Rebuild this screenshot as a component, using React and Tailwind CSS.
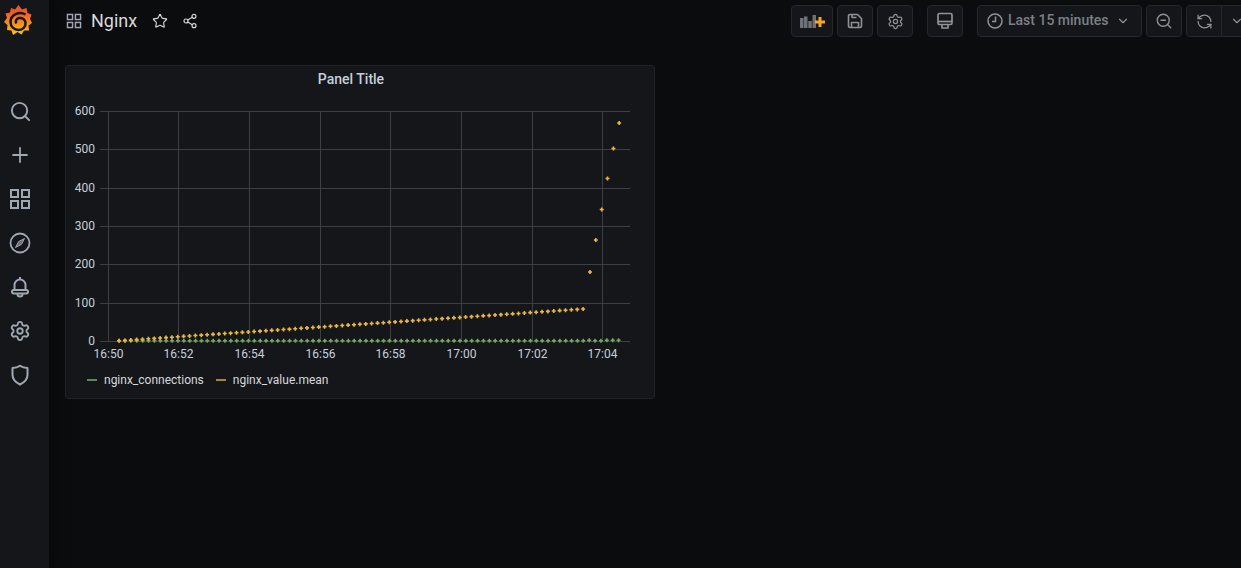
import { Search, Plus, Settings, Star, Share2, ZoomOut, RefreshCcw, ChevronDown } from "lucide-react";

const FONT = "font-['Roboto',_'Liberation_Sans',_sans-serif]";

function GridIcon({ size = 22, className = "" }) {
  return (
    <svg width={size} height={size} viewBox="0 0 22 22" fill="none" stroke="currentColor" strokeWidth="2" className={className}>
      <rect x="2" y="2" width="7" height="7" />
      <rect x="13" y="2" width="7" height="7" />
      <rect x="2" y="13" width="7" height="7" />
      <rect x="13" y="13" width="7" height="7" />
    </svg>
  );
}

function CompassIcon() {
  return (
    <svg width="22" height="22" viewBox="0 0 22 22" fill="none" stroke="currentColor" strokeWidth="1.800">
      <circle cx="11" cy="11" r="9.500" />
      <path d="M15.500 6.500 L12.400 12.400 L6.500 15.500 L9.600 9.600 Z" fill="currentColor" fillOpacity="0.6" strokeWidth="1" />
    </svg>
  );
}

function BellIcon() {
  return (
    <svg width="22" height="22" viewBox="0 0 22 22" fill="none" stroke="currentColor" strokeWidth="2">
      <path d="M11 1V3.500" />
      <path d="M5.500 14V9a5.500 5.500 0 0 1 11 0V14" />
      <rect x="3" y="14" width="16" height="3.500" rx="1.750" />
      <path d="M8.500 18a2.500 2.500 0 0 0 5 0" />
    </svg>
  );
}

function ShieldIcon() {
  return (
    <svg width="22" height="22" viewBox="0 0 22 22" fill="none" stroke="currentColor" strokeWidth="2">
      <path d="M11 1.800 C13 3.300 15.500 4 18.500 4 V11 C18.500 15.500 15 18.500 11 20.500 C7 18.500 3.500 15.500 3.500 11 V4 C6.500 4 9 3.300 11 1.800 Z" strokeLinejoin="round" />
    </svg>
  );
}

function SaveIcon() {
  return (
    <svg width="16" height="16" viewBox="0 0 16 16" fill="none" stroke="currentColor" strokeWidth="1.600" strokeLinejoin="round">
      <path d="M3 1.500 H10.500 L14.500 5.500 V13 A1.500 1.500 0 0 1 13 14.500 H3 A1.500 1.500 0 0 1 1.500 13 V3 A1.500 1.500 0 0 1 3 1.500 Z" />
      <path d="M4.500 14.500 V9.500 H11.500 V14.500" />
      <path d="M5 1.500 V4.500 H9.500" />
    </svg>
  );
}

function MonitorIcon() {
  return (
    <svg width="18" height="18" viewBox="0 0 18 18" fill="none" stroke="currentColor" strokeWidth="1.700" strokeLinejoin="round">
      <rect x="2" y="1.500" width="14" height="11" rx="1.500" />
      <path d="M2 9.500 H16" />
      <path d="M6 12.500 V16 H12 V12.500" />
    </svg>
  );
}

function ClockIcon() {
  return (
    <svg width="16" height="16" viewBox="0 0 16 16" fill="none" stroke="currentColor" strokeWidth="1.500">
      <circle cx="8" cy="8" r="7" />
      <path d="M8.500 3.500 V8.500 H5" />
    </svg>
  );
}

function Logo() {
  return (
    <svg width="28" height="30" viewBox="0 0 28 30">
      <defs>
        <linearGradient id="g" x1="0" y1="1" x2="0" y2="0">
          <stop offset="0" stopColor="#fbca0a" />
          <stop offset="0.75" stopColor="#f05a28" />
          <stop offset="1" stopColor="#ef4f2a" />
        </linearGradient>
      </defs>
      <path
        fill="url(#g)"
        d="M14.500 0 L18 4.500 L22.500 3 L23.500 8 L27.500 9.500 L26 14 L28 18 L24.500 20.500 L25 25.500 L20 25.500 L17.500 29.500 L13.500 27 L9 30 L7.500 25.500 L3 25 L3.500 20 L0 17 L3 13 L1.500 8.500 L6 7.500 L7 3 L11 4.500 Z"
      />
      <path
        d="M21.500 9.500 C15 5.800 6.500 10 6.500 17 C6.500 22 10.500 25 14.500 25 C19 25 22 21.500 21.500 17.500 C21 14 18 12.500 15 13 C12.500 13.500 11 16 12.300 18.500"
        fill="none"
        stroke="#141619"
        strokeWidth="2.500"
      />
    </svg>
  );
}

function ToolButton({ className = "", children }) {
  return (
    <div className={`h-8 flex items-center justify-center bg-[#141619] border border-[#25272b] rounded-sm text-[#8e9297] ${className}`}>
      {children}
    </div>
  );
}

const navIcons = [
  <Search key="s" size={23} strokeWidth={2} />,
  <Plus key="p" size={24} strokeWidth={1.8} />,
  <GridIcon key="g" />,
  <CompassIcon key="c" />,
  <BellIcon key="b" />,
  <Settings key="st" size={22} strokeWidth={2} />,
  <ShieldIcon key="sh" />,
];

const yTicks = [0, 100, 200, 300, 400, 500, 600];
const xTicks = [
  ["16:50", 108.5], ["16:52", 178.5], ["16:54", 249.5], ["16:56", 320.5],
  ["16:58", 390.5], ["17:00", 461.5], ["17:02", 532.5], ["17:04", 602.5],
];
const yOf = (v) => Math.floor(341.5 - v * 0.3833) + 0.5;

const step = 5.875;
const yellow = [];
for (let i = 0; i < 80; i++) yellow.push([119 + i * step, 340.8 - (i * 31.8) / 79]);
const spike = [[590, 272], [595.8, 240], [601.7, 209.5], [607.5, 178.5], [613.4, 148.5], [619.2, 123]];
const green = [];
for (let i = 0; i < 86; i++) green.push([119.2 + i * step, i > 82 || i === 80 ? 340.2 : 340.8]);

function Dot({ x, y, color }) {
  return <path d={`M${x - 2} ${y}H${x + 2}M${x} ${y - 2}V${y + 2}`} stroke={color} strokeWidth="1.6" />;
}

function Chart() {
  return (
    <svg width="588" height="268" viewBox="66 98 588 268" className="block">
      {yTicks.map((v) => (
        <g key={v}>
          <line x1="100" x2="630" y1={yOf(v)} y2={yOf(v)} stroke="#3d3f43" />
          <text x="95" y={yOf(v) + 3.5} textAnchor="end" fontSize="12" fill="#c7d0d9">{v}</text>
        </g>
      ))}
      {xTicks.map(([t, x]) => (
        <g key={t}>
          <line x1={x} x2={x} y1="111" y2="341" stroke="#3d3f43" />
          <text x={x} y="358" textAnchor="middle" fontSize="12" fill="#c7d0d9">{t}</text>
        </g>
      ))}
      {green.map(([x, y], i) => <Dot key={i} x={x} y={y} color="#73a85f" />)}
      {yellow.map(([x, y], i) => <Dot key={i} x={x} y={y} color="#eab839" />)}
      {spike.map(([x, y], i) => <Dot key={i} x={x} y={y} color="#eab839" />)}
    </svg>
  );
}

function LegendItem({ color, label, className = "" }) {
  return (
    <div className={`flex items-center ${className}`}>
      <span className={`w-[10px] h-[2px] ${color}`} />
      <span className="ml-[7px] text-xs text-[#d8d9da]">{label}</span>
    </div>
  );
}

export default function App() {
  return (
    <div className={`flex w-[1241px] h-[568px] overflow-hidden bg-[#0b0c0e] ${FONT}`}>
      <aside className="relative z-10 w-[49px] shrink-0 bg-[#141619] text-[#9fa7b3] shadow-[0_0_20px_rgba(0,0,0,0.6)]">
        <div className="h-[89px] pt-[5px] pl-[4px] flex items-start">
          <Logo />
        </div>
        {navIcons.map((icon, i) => (
          <div key={i} className="w-10 h-11 flex items-center justify-center">{icon}</div>
        ))}
      </aside>

      <main className="flex-1 min-w-0">
        <header className="h-[40px] pt-[5px] flex items-start">
          <div className="ml-[17px] h-8 flex items-center text-[#9fa7b3]">
            <GridIcon size={16} />
            <span className="ml-[9px] text-lg text-[#d8d9da] w-[46px]">Nginx</span>
            <Star size={16} strokeWidth={1.7} className="ml-[15px] text-[#d8d9da]" />
            <Share2 size={16} strokeWidth={1.7} className="ml-[14px] text-[#d8d9da]" />
          </div>

          <div className="ml-auto mr-[-11px] flex">
            <ToolButton className="w-[42px]">
              <svg width="26" height="13" viewBox="-1 0 26 13">
                <rect x="0" y="3" width="3.500" height="10" fill="#6e7277" />
                <rect x="4" y="1.500" width="3.500" height="11.500" fill="#6e7277" />
                <rect x="8.300" y="6" width="3.500" height="7" fill="#6e7277" />
                <rect x="12.500" y="0" width="3.500" height="13" fill="#6e7277" />
                <path d="M20 2V12M15 7H25" stroke="#f5a623" strokeWidth="3" />
              </svg>
            </ToolButton>
            <ToolButton className="w-9 ml-1"><SaveIcon /></ToolButton>
            <ToolButton className="w-9 ml-1"><Settings size={17} strokeWidth={1.8} /></ToolButton>
            <ToolButton className="w-9 ml-[14px]"><MonitorIcon /></ToolButton>
            <ToolButton className="w-[165px] ml-[14px] justify-start pl-[9px] pr-[11px]">
              <ClockIcon />
              <span className="ml-[5px] pb-[2px] text-sm font-medium text-[#7b8087]">Last 15 minutes</span>
              <ChevronDown size={14} strokeWidth={2} className="ml-auto" />
            </ToolButton>
            <ToolButton className="w-9 ml-1"><ZoomOut size={18} strokeWidth={1.8} /></ToolButton>
            <ToolButton className="w-9 ml-1 rounded-r-none"><RefreshCcw size={17} strokeWidth={1.8} /></ToolButton>
            <ToolButton className="w-[30px] border-l-0 rounded-l-none"><ChevronDown size={14} strokeWidth={2} /></ToolButton>
          </div>
        </header>

        <section className="ml-4 mt-[25px] w-[590px] h-[334px] bg-[#141619] border border-[#202226] rounded-[3px]">
          <h2 className="h-[32px] pb-[6px] pr-[18px] flex items-center justify-center text-sm font-medium text-[#c7d0d9]">Panel Title</h2>
          <Chart />
          <div className="flex items-center h-[28px] pl-[21px]">
            <LegendItem color="bg-[#5e8a50]" label="nginx_connections" />
            <LegendItem color="bg-[#a8862f]" label="nginx_value.mean" className="ml-[12px]" />
          </div>
        </section>
      </main>
    </div>
  );
}
